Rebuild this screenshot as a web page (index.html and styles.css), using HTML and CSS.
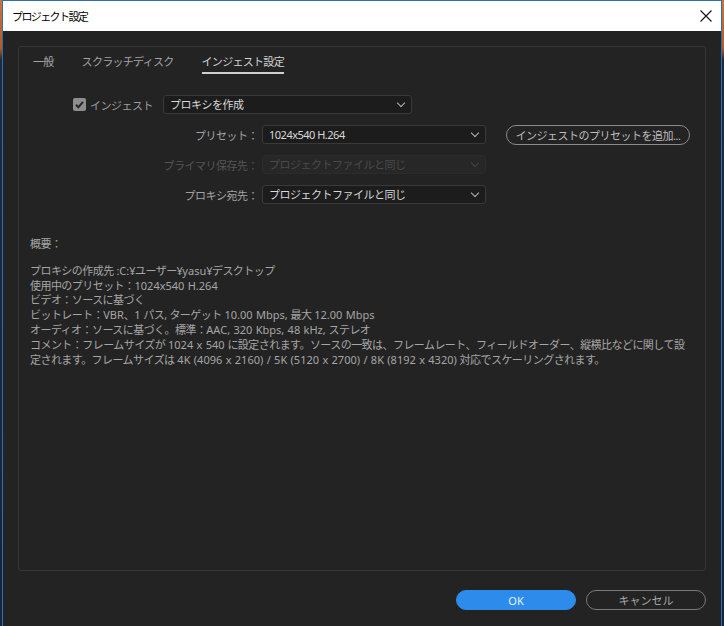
FILE: index.html
```html
<!DOCTYPE html>
<html lang="ja">
<head>
  <meta charset="UTF-8">
  <title>プロジェクト設定</title>
  <link rel="stylesheet" href="styles.css">
</head>
<body>
  <div class="window">
    <div class="titlebar">
      <span class="title">プロジェクト設定</span>
      <svg class="close" width="12" height="12" viewBox="0 0 12 12">
        <path d="M0.5 0.5 L11.5 11.5 M11.5 0.5 L0.5 11.5" stroke="#111" stroke-width="1.1" fill="none"/>
      </svg>
    </div>

    <div class="content">
      <div class="panel">
        <div class="tabs">
          <span class="tab">一般</span>
          <span class="tab">スクラッチディスク</span>
          <span class="tab active">インジェスト設定</span>
        </div>

        <div class="form">
          <div class="row row-ingest">
            <label class="check">
              <span class="box">
                <svg width="13" height="13" viewBox="0 0 13 13">
                  <path d="M3 6.8 L5.4 9.2 L10 3.8" stroke="#262626" stroke-width="2" fill="none"/>
                </svg>
              </span>
              インジェスト
            </label>
            <div class="select wide">プロキシを作成<span class="chev"></span></div>
          </div>

          <div class="row">
            <span class="label">プリセット：</span>
            <div class="select">1024x540 H.264<span class="chev"></span></div>
            <button class="pill">インジェストのプリセットを追加...</button>
          </div>

          <div class="row">
            <span class="label disabled">プライマリ保存先：</span>
            <div class="select disabled">プロジェクトファイルと同じ<span class="chev"></span></div>
          </div>

          <div class="row">
            <span class="label">プロキシ宛先：</span>
            <div class="select">プロジェクトファイルと同じ<span class="chev"></span></div>
          </div>
        </div>

        <div class="summary">
          <p class="summary-head">概要：</p>
          <p>プロキシの作成先 <span class="lat">:C:</span>¥ユーザー¥<span class="lat">yasu</span>¥デスクトップ</p>
          <p>使用中のプリセット：<span class="lat">1024x540 H.264</span></p>
          <p>ビデオ：ソースに基づく</p>
          <p>ビットレート：<span class="lat">VBR</span>、<span class="lat">1</span> パス, ターゲット <span class="lat">10.00 Mbps,</span> 最大 <span class="lat">12.00 Mbps</span></p>
          <p>オーディオ：ソースに基づく。標準：<span class="lat">AAC, 320 Kbps, 48 kHz,</span> ステレオ</p>
          <p>コメント：フレームサイズが <span class="lat">1024 x 540</span> に設定されます。ソースの一致は、フレームレート、フィールドオーダー、縦横比などに関して設<br>定されます。フレームサイズは <span class="lat">4K (4096 x 2160) / 5K (5120 x 2700) / 8K (8192 x 4320)</span> 対応でスケーリングされます。</p>
        </div>
      </div>

      <div class="buttons">
        <button class="btn ok">OK</button>
        <button class="btn cancel">キャンセル</button>
      </div>
    </div>
  </div>
</body>
</html>
```

FILE: styles.css
```css
html, body {
  margin: 0;
  height: 626px;
  overflow: hidden;
}
body {
  background: linear-gradient(to bottom, #c8743a 0, #b55a2a 48px, #1c2b40 60px, #17253a 100%);
  background-color: #1c2b40;
  font-family: "Noto Sans", "Noto Sans CJK JP", sans-serif;
  font-size: 11px;
  letter-spacing: -0.5px;
}
.window {
  width: 718px;
  height: 640px;
  margin-left: 2px;
  border: 1px solid #2e6fae;
  background: #232323;
  display: flex;
  flex-direction: column;
}
.titlebar {
  height: 30px;
  background: #fff;
  display: flex;
  align-items: center;
  justify-content: space-between;
  padding: 0 9px 0 9px;
}
.title {
  font-size: 11px;
  letter-spacing: -1.6px;
  color: #000;
}
.content {
  padding: 15px 15px 0 15px;
}
.panel {
  height: 525px;
  border: 1px solid #363636;
  border-radius: 3px;
  padding: 0 11px;
  box-sizing: border-box;
}
.tabs {
  display: flex;
  gap: 28px;
  padding: 7px 0 0 3px;
  height: 26px;
  box-sizing: border-box;
}
.tab {
  color: #a3a3a3;
  line-height: 16px;
  height: 18px;
  letter-spacing: -0.7px;
}
.tab.active {
  color: #d2d2d2;
  border-bottom: 2px solid #cfcfcf;
}
.form {
  margin-top: 22px;
  display: flex;
  flex-direction: column;
  gap: 11px;
}
.row {
  display: flex;
  align-items: center;
  height: 19px;
}
.row-ingest {
  padding-left: 43px;
}
.check {
  width: 90px;
  display: flex;
  align-items: center;
  gap: 4px;
  color: #9d9d9d;
}
.box {
  width: 13px;
  height: 13px;
  border-radius: 2px;
  background: #8e8e8e;
  display: inline-flex;
}
.label {
  width: 228px;
  margin-right: 4px;
  text-align: right;
  color: #a3a3a3;
}
.label.disabled {
  color: #555;
}
.select {
  position: relative;
  width: 224px;
  height: 19px;
  box-sizing: border-box;
  border: 1px solid #393939;
  border-radius: 3px;
  background: #1c1c1c;
  color: #d8d8d8;
  padding-left: 6px;
  line-height: 17px;
}
.select.wide {
  width: 249px;
}
.select.disabled {
  background: #272727;
  border-color: #2b2b2b;
  color: #4b4b4b;
}
.chev {
  position: absolute;
  right: 7px;
  top: 4px;
  width: 5px;
  height: 5px;
  border-right: 1px solid #b4b4b4;
  border-bottom: 1px solid #b4b4b4;
  transform: rotate(45deg);
}
.select.disabled .chev {
  border-color: #444;
}
.pill {
  margin-left: 20px;
  width: 184px;
  height: 20px;
  border: 1px solid #8a8a8a;
  border-radius: 10px;
  background: transparent;
  color: #bdbdbd;
  font: inherit;
  letter-spacing: -0.5px;
  padding: 0;
}
.summary {
  margin-top: 33px;
  color: #a6a6a6;
  letter-spacing: -0.55px;
  word-spacing: 0.5px;
}
.summary .lat {
  letter-spacing: 0;
}
.summary p {
  margin: 0;
  line-height: 14.8px;
  white-space: nowrap;
}
.summary .summary-head {
  margin-bottom: 12px;
}
.buttons {
  display: flex;
  justify-content: flex-end;
  gap: 10px;
  margin-top: 19px;
}
.btn {
  width: 120px;
  height: 20px;
  border-radius: 10px;
  font: inherit;
  padding: 0;
}
.ok {
  background: #2d8ceb;
  border: 1px solid #2d8ceb;
  color: #e9f2fc;
}
.cancel {
  background: transparent;
  border: 1px solid #7a7a7a;
  color: #a8a8a8;
}
```
